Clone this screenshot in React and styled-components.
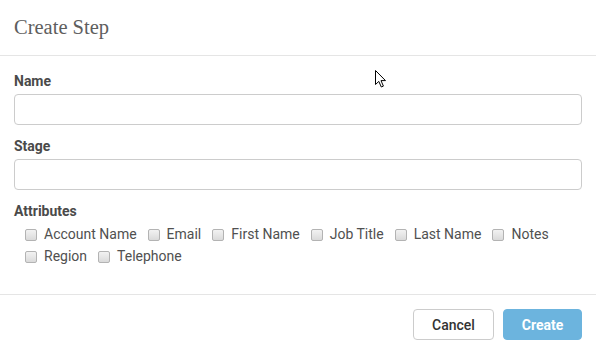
import React from "react";
import styled, { createGlobalStyle } from "styled-components";

const Global = createGlobalStyle`
  html, body { margin: 0; padding: 0; background: #fff; }
  body { font-family: Roboto, "Liberation Sans", Arial, sans-serif; color: #444; }
  * { box-sizing: border-box; }
`;

const Dialog = styled.div`
  position: relative;
  width: 596px;
  height: 354px;
  background: #fff;
  display: flex;
  flex-direction: column;
  overflow: hidden;
`;

const Header = styled.div`
  height: 56px;
  display: flex;
  align-items: center;
  padding: 0 14px 1px;
  border-bottom: 1px solid #e5e5e5;
`;

const Title = styled.h4`
  margin: 0;
  font-family: "Liberation Serif", "DejaVu Serif", serif;
  font-weight: 400;
  font-size: 20.5px;
  color: #5e5e5e;
`;

const Body = styled.div`
  padding: 15px 14px 0;
  flex: 1;
  display: flex;
  flex-direction: column;
  gap: 11px;
`;

const Group = styled.div`
  display: flex;
  flex-direction: column;
  gap: 3px;
`;

const Label = styled.label`
  font-size: 14px;
  line-height: 20px;
  font-weight: 700;
  color: #4a4a4a;
`;

const Input = styled.input`
  width: 100%;
  height: 31px;
  border: 1px solid #cccccc;
  border-radius: 4px;
  padding: 0 10px;
  font: inherit;
  outline: none;
`;

const Checks = styled.div`
  display: flex;
  flex-wrap: wrap;
  column-gap: 11px;
  row-gap: 2px;
  padding-left: 11px;
`;

const CheckItem = styled.label`
  display: flex;
  align-items: center;
  gap: 7px;
  font-size: 14px;
  line-height: 20px;
  color: #505050;
`;

const Box = styled.input.attrs({ type: "checkbox" })`
  appearance: none;
  -webkit-appearance: none;
  margin: 1px 0 0;
  width: 12px;
  height: 12px;
  border: 1px solid #b3b3b3;
  border-radius: 2px;
  background: linear-gradient(#f2f2f2, #dadada);
`;

const Footer = styled.div`
  border-top: 1px solid #e5e5e5;
  padding: 14px 14px 14px;
  display: flex;
  justify-content: flex-end;
  gap: 9px;
`;

const Button = styled.button`
  height: 31px;
  padding: 0;
  width: ${(p) => (p.$primary ? "79px" : "81px")};
  border-radius: 4px;
  font-family: Roboto, "Liberation Sans", sans-serif;
  font-size: 14px;
  font-weight: ${(p) => (p.$primary ? 700 : 500)};
  border: 1px solid ${(p) => (p.$primary ? "#6cb4de" : "#cccccc")};
  background: ${(p) => (p.$primary ? "#6cb4de" : "#ffffff")};
  color: ${(p) => (p.$primary ? "#ffffff" : "#333333")};
`;

const Cursor = styled.svg`
  position: absolute;
  left: 374px;
  top: 69px;
  pointer-events: none;
`;

const attributes = [
  "Account Name",
  "Email",
  "First Name",
  "Job Title",
  "Last Name",
  "Notes",
  "Region",
  "Telephone",
];

export default function App() {
  return (
    <>
      <Global />
      <Dialog>
        <Header>
          <Title>Create Step</Title>
        </Header>
        <Body>
          <Group>
            <Label>Name</Label>
            <Input />
          </Group>
          <Group>
            <Label>Stage</Label>
            <Input />
          </Group>
          <Group>
            <Label>Attributes</Label>
            <Checks>
              {attributes.map((a) => (
                <CheckItem key={a}>
                  <Box />
                  {a}
                </CheckItem>
              ))}
            </Checks>
          </Group>
        </Body>
        <Footer>
          <Button>Cancel</Button>
          <Button $primary>Create</Button>
        </Footer>
        <Cursor width="14" height="20" viewBox="0 0 14 20">
          <path
            d="M1.5 1.5 L1.5 15.5 L4.8 12.4 L7.3 18 L9.4 17.1 L7 11.6 L11.5 11.6 Z"
            fill="#fff"
            stroke="#000"
            strokeWidth="1"
            strokeLinejoin="miter"
          />
        </Cursor>
      </Dialog>
    </>
  );
}
